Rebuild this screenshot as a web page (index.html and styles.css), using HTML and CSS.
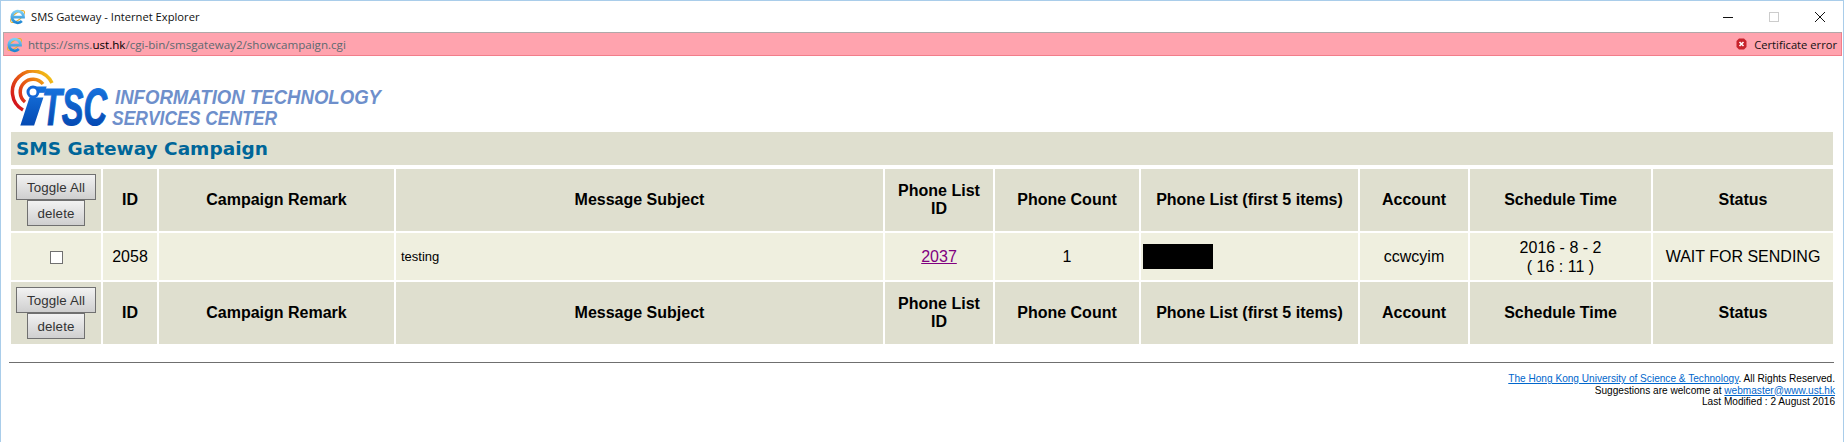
FILE: index.html
```html
<!DOCTYPE html>
<html lang="en">
<head>
    <meta charset="UTF-8">
    <title>SMS Gateway - Internet Explorer</title>
    <link rel="stylesheet" href="styles.css">
</head>
<body>
    <svg class="icon-defs" width="0" height="0">
        <defs>
            <linearGradient id="ie-blue" x1="0" y1="0" x2="0" y2="1">
                <stop offset="0" stop-color="#7fd0f5"/>
                <stop offset="1" stop-color="#1f86d2"/>
            </linearGradient>
            <linearGradient id="itsc-blue" x1="0" y1="0" x2="0" y2="1">
                <stop offset="0" stop-color="#1b7de8"/>
                <stop offset="1" stop-color="#003fa8"/>
            </linearGradient>
            <linearGradient id="ring-hot" gradientUnits="userSpaceOnUse" x1="6" y1="34" x2="42" y2="6">
                <stop offset="0" stop-color="#d3141c"/>
                <stop offset=".55" stop-color="#ea6a12"/>
                <stop offset="1" stop-color="#f2c418"/>
            </linearGradient>
            <symbol id="ie-icon" viewBox="0 0 18 18">
                <ellipse cx="9" cy="9" rx="9" ry="3.7" transform="rotate(-38 9 9)" fill="none" stroke="#ecb22e" stroke-width="1.2"/>
                <path d="M3.4 9.6H15.4A6.2 6.2 0 1 0 13.6 13.8" fill="none" stroke="url(#ie-blue)" stroke-width="2.9"/>
            </symbol>
        </defs>
    </svg>

    <div class="title-bar">
        <svg class="ie"><use href="#ie-icon"/></svg>
        <span class="title-text">SMS Gateway - Internet Explorer</span>
        <div class="window-buttons">
            <svg width="12" height="12" viewBox="0 0 12 12"><path d="M1 6.5h10" stroke="#111" stroke-width="1"/></svg>
            <svg width="12" height="12" viewBox="0 0 12 12"><rect x="1.5" y="1.5" width="9" height="9" fill="none" stroke="#ccc"/></svg>
            <svg width="12" height="12" viewBox="0 0 12 12"><path d="M1 1l10 10M11 1L1 11" stroke="#111" stroke-width="1"/></svg>
        </div>
    </div>

    <div class="address-bar">
        <svg class="ie"><use href="#ie-icon"/></svg>
        <span class="url">https://sms.<b>ust.hk</b>/cgi-bin/smsgateway2/showcampaign.cgi</span>
        <span class="cert">
            <svg width="11" height="12" viewBox="0 0 11 12">
                <path d="M3 .5h5L10.500 3v6L8 11.500H3L.5 9V3z" fill="#c8232c"/>
                <path d="M3.500 4l4 4M7.500 4l-4 4" stroke="#fff" stroke-width="1.600"/>
            </svg>
            Certificate error
        </span>
    </div>

    <div class="page">
        <svg class="logo" width="380" height="62" viewBox="0 0 380 62">
            <g fill="none" stroke="url(#ring-hot)" stroke-width="3.500">
                <path d="M14 40A20.800 20.800 0 1 1 43 13"/>
                <path d="M16 32A12.800 12.800 0 1 1 34 14"/>
            </g>
            <text class="logo-mark" x="11" y="55" textLength="24" lengthAdjust="spacingAndGlyphs">i</text>
            <text class="logo-mark" x="33" y="55" textLength="65" lengthAdjust="spacingAndGlyphs">TSC</text>
            <circle cx="24" cy="22" r="5" fill="#fff" stroke="#1468d8" stroke-width="3"/>
            <text class="logo-line" x="106" y="34" textLength="266" lengthAdjust="spacingAndGlyphs">INFORMATION TECHNOLOGY</text>
            <text class="logo-line" x="103" y="54.500" textLength="165" lengthAdjust="spacingAndGlyphs">SERVICES CENTER</text>
        </svg>

        <h1 class="page-title">SMS Gateway Campaign</h1>

        <table class="campaigns">
            <colgroup>
                <col class="c-select"><col class="c-id"><col class="c-remark"><col class="c-subject">
                <col class="c-list-id"><col class="c-count"><col class="c-list"><col class="c-account">
                <col class="c-time"><col class="c-status">
            </colgroup>
            <tr class="head-row">
                <th class="tools"><button>Toggle All</button><br><button>delete</button></th>
                <th>ID</th>
                <th>Campaign Remark</th>
                <th>Message Subject</th>
                <th>Phone List ID</th>
                <th>Phone Count</th>
                <th>Phone List (first 5 items)</th>
                <th>Account</th>
                <th>Schedule Time</th>
                <th>Status</th>
            </tr>
            <tr class="data-row">
                <td><span class="check"></span></td>
                <td>2058</td>
                <td></td>
                <td class="subject">testing</td>
                <td><a href="#" class="visited">2037</a></td>
                <td>1</td>
                <td class="phones"><span class="redacted"></span></td>
                <td>ccwcyim</td>
                <td>2016 - 8 - 2<br>( 16 : 11 )</td>
                <td>WAIT FOR SENDING</td>
            </tr>
            <tr class="head-row">
                <th class="tools"><button>Toggle All</button><br><button>delete</button></th>
                <th>ID</th>
                <th>Campaign Remark</th>
                <th>Message Subject</th>
                <th>Phone List ID</th>
                <th>Phone Count</th>
                <th>Phone List (first 5 items)</th>
                <th>Account</th>
                <th>Schedule Time</th>
                <th>Status</th>
            </tr>
        </table>

        <hr class="rule">

        <div class="footer">
            <div><a href="#">The Hong Kong University of Science &amp; Technology</a>. All Rights Reserved.</div>
            <div>Suggestions are welcome at <a href="#">webmaster@www.ust.hk</a></div>
            <div>Last Modified : 2 August 2016</div>
        </div>
    </div>
</body>
</html>
```

FILE: styles.css
```css
html, body {
    height: 100%;
}
body {
    margin: 0;
    background: #fff;
    border: 1px solid #a9cdea;
    border-bottom: none;
    box-sizing: border-box;
    overflow: hidden;
    font-family: "Liberation Sans", Arial, sans-serif;
    color: #000;
}
.icon-defs {
    display: block;
    height: 0;
}
.ie {
    width: 17px;
    height: 17px;
    flex: none;
}

/* window chrome */
.title-bar {
    display: flex;
    align-items: center;
    height: 31px;
    padding-left: 8px;
}
.title-text {
    margin-left: 5px;
    font-family: "Open Sans", sans-serif;
    font-size: 11.2px;
    color: #111;
}
.window-buttons {
    display: flex;
    gap: 34px;
    margin-left: auto;
    padding-right: 17px;
    align-items: center;
}
.address-bar {
    display: flex;
    align-items: center;
    height: 24px;
    margin: 0 1px 0 2px;
    padding: 0 4px 0 2px;
    box-sizing: border-box;
    background: #ffa3ae;
    border: 1px solid #f27d8a;
    border-top-color: #b0a8a9;
    border-left-color: #b0a8a9;
    font-family: "Open Sans", sans-serif;
    font-size: 11.6px;
}
.url {
    margin-left: 5px;
    color: #5d6a70;
}
.url b {
    font-weight: 400;
    color: #000;
}
.cert {
    display: flex;
    align-items: center;
    gap: 7px;
    margin-left: auto;
    font-size: 11.2px;
    color: #111;
}

/* page */
.page {
    padding: 14px 8px 0 8px;
}
.logo {
    display: block;
    height: 62px;
}
.logo-mark {
    font-family: "Liberation Sans", sans-serif;
    font-weight: 700;
    font-style: italic;
    font-size: 52px;
    fill: url(#itsc-blue);
    stroke: url(#itsc-blue);
    stroke-width: 1.2px;
}
.logo-line {
    font-family: "Liberation Sans", sans-serif;
    font-weight: 700;
    font-style: italic;
    font-size: 21px;
    fill: #6e8fcb;
}
.page-title {
    margin: 0 2px;
    height: 33px;
    line-height: 33px;
    padding-left: 5px;
    background: #dfdfcf;
    font-family: "DejaVu Sans", sans-serif;
    font-size: 18.5px;
    font-weight: 700;
    color: #006699;
}
.campaigns {
    table-layout: fixed;
    width: 1826px;
    margin-top: 2px;
    border-spacing: 2px;
}
.c-select { width: 90px; }
.c-id { width: 54px; }
.c-remark { width: 235px; }
.c-subject { width: 487px; }
.c-list-id { width: 108px; }
.c-count { width: 144px; }
.c-list { width: 217px; }
.c-account { width: 108px; }
.c-time { width: 181px; }
.c-status { width: 180px; }

.campaigns th, .campaigns td {
    padding: 0;
    text-align: center;
    font-size: 16px;
}
.head-row th {
    height: 62px;
    padding: 0 8px;
    line-height: 18px;
    background: #dfdfcf;
    font-weight: 700;
}
.head-row .tools {
    padding: 0;
}
.data-row td {
    height: 47px;
    line-height: 19px;
    background: #efefdf;
}
.campaigns .subject {
    padding-left: 5px;
    text-align: left;
    font-size: 13px;
}
.campaigns .phones {
    padding-left: 2px;
    text-align: left;
}
.redacted {
    display: block;
    width: 70px;
    height: 25px;
    background: #000;
}
.check {
    display: inline-block;
    width: 11px;
    height: 11px;
    vertical-align: middle;
    background: #fff;
    border: 1px solid #707070;
}
.visited {
    color: #800080;
}
.head-row button {
    display: inline-block;
    padding: 0 10px;
    height: 26px;
    vertical-align: top;
    font-family: "Liberation Sans", sans-serif;
    font-size: 13.33px;
    letter-spacing: .1px;
    color: #333;
    background: linear-gradient(#f2f2f2, #cfcfcf);
    border: 1px solid #707070;
    border-radius: 0;
}
.rule {
    margin: 16px 1px 0 0;
    height: 1px;
    border: none;
    background: #6f6f6f;
}
.footer {
    margin-top: 10px;
    text-align: right;
    font-size: 10.1px;
    line-height: 11.5px;
}
.footer a {
    color: #0066cc;
}
```
